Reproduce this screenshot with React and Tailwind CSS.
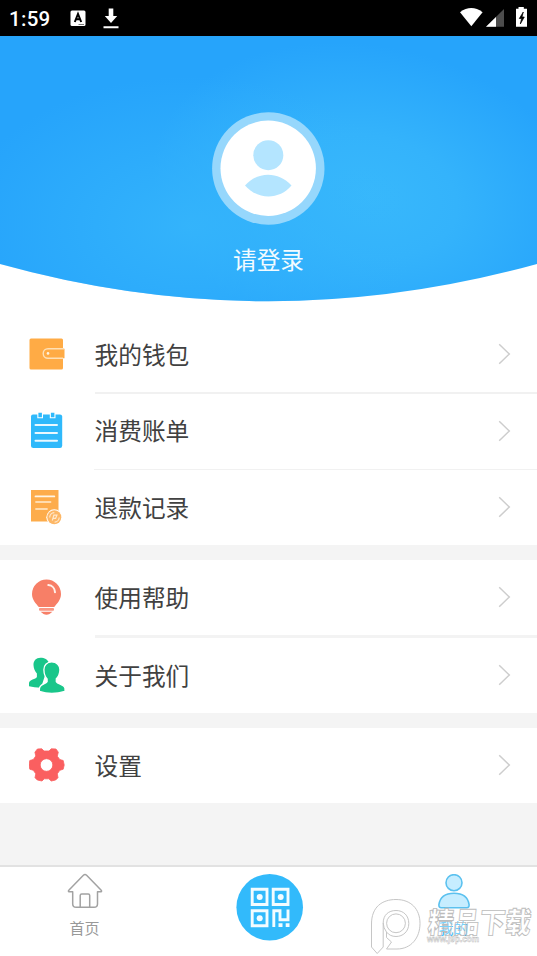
const FONT = "font-['Noto_Sans_CJK_SC',sans-serif]";

function WalletIcon() {
  return (
    <svg width="36" height="36" viewBox="0 0 36 36">
      <rect x="0.5" y="2.5" width="33.5" height="31" rx="1.5" fill="#ffab45" />
      <path d="M35.5 12.7H19a4.8 4.8 0 0 0 0 9.6H35.5z" fill="#ffab45" />
      <path d="M35 12.7H19a4.8 4.8 0 0 0 0 9.6H34" fill="none" stroke="#ffe0b5" strokeWidth="1.4" />
      <circle cx="19" cy="17.4" r="1.3" fill="#fff3e0" />
    </svg>
  );
}

function BillIcon() {
  return (
    <svg width="36" height="36" viewBox="0 0 36 36">
      <path d="M4 2.5H31Q33.2 2.5 33.2 4.5V33.5Q33.2 36 31 36H4.5Q2 36 2 33.5V4.5Q2 2.5 4 2.5Z" fill="#2fb9fb" />
      <path d="M8.3 0V6.3H14V0M20.8 0V6.3H26.5V0" fill="#fff" />
      <path d="M9.4 .8H12.9V5.2H9.4ZM21.9 .8H25.4V5.2H21.9Z" fill="#2fb9fb" />
      <path d="M6.5 13H28M6.5 21H28M6.5 28.7H28" stroke="#e9f8ff" strokeWidth="2" strokeLinecap="round" />
    </svg>
  );
}

function RefundIcon() {
  return (
    <svg width="36" height="36" viewBox="0 0 36 36">
      <path d="M2 1H29.5V32.5H2Z" fill="#fdac4b" />
      <path d="M6.5 7.4H25.3" stroke="#fff5e6" strokeWidth="1.8" strokeLinecap="round" />
      <path d="M7 13H21.5M7 20H18" stroke="#ffdcae" strokeWidth="1.8" strokeLinecap="round" />
      <circle cx="25.3" cy="28.3" r="8" fill="#fff" />
      <circle cx="25.3" cy="28.3" r="7" fill="#fdb766" />
      <path d="M20.7 28.5a4.8 4.8 0 0 1 4.6-4.8M30.2 28.5a4.8 4.8 0 0 1-4.6 4.6M23.3 31.5l1.6-5.3h3l-1.3 3.2h-2.5" fill="none" stroke="#ffe9cd" strokeWidth="1.2" />
    </svg>
  );
}

function BulbIcon() {
  return (
    <svg width="36" height="36" viewBox="0 0 36 36">
      <path d="M17.5.5A14.5 14.5 0 0 0 3 15C3 21 7 24.5 9.8 28H25.2C28 24.5 32 21 32 15A14.5 14.5 0 0 0 17.5.5Z" fill="#f77f67" />
      <path d="M19.3 6C23.3 6.4 25.9 9.5 26 13.3" fill="none" stroke="#fff1eb" strokeWidth="2" strokeLinecap="round" />
      <rect x="10" y="28.9" width="15" height="2.8" rx="1" fill="#f99783" />
      <path d="M11.5 32.7H23.5L20.5 34.9Q17.5 36.5 14.5 34.9Z" fill="#f77f67" />
    </svg>
  );
}

function PeopleIcon() {
  return (
    <svg width="36" height="36" viewBox="0 0 36 36">
      <path d="M11.5.7C7 .7 4.3 3.8 4.5 8.3C4.6 11.5 6 14.5 7.9 16.5V20C7 22.5 0 22.2 0 26.3V29.3Q5 30.7 12 30.7L20 6C18.8 2.5 15.5.7 11.5.7Z" fill="#19c68a" />
      <path d="M22.7 4.9C17.8 4.9 14.7 8.5 14.9 13C15 16.5 16.3 20 18.1 22V24.7C16.5 27.5 10.4 26.7 10.4 32V34.3Q22.5 38.5 36 34.3V31.5C35.5 27.3 28.9 27.5 27.3 24.7V21.8C29.3 19.7 30.8 16.7 30.9 13C31.1 8.5 27.7 4.9 22.7 4.9Z" fill="#19c68a" stroke="#fff" strokeWidth="1.3" />
    </svg>
  );
}

function GearIcon() {
  return (
    <svg width="36" height="36" viewBox="0 0 36 36">
      <path fillRule="evenodd" d="M8.4 2 12.8 1.8 15 4H20L22.2 1.8 27 2 29.3 5.2 28.3 9.2 30.8 12.5 34.2 13.5 35.2 18 34.2 22.2 30.8 23.3 28.3 26.8 29 30.7 26.7 33 22.2 34 19.8 31.8H15.2L13 34 8.3 33 6 30.7 6.8 26.8 4.3 23.3.8 22.2 0 18 .8 13.5 4.3 12.5 6.8 9 5.9 5.2ZM17.5 11.7a6.3 6.3 0 1 0 0 12.6 6.3 6.3 0 0 0 0-12.6Z" fill="#fa5f60" stroke="#fa5f60" strokeWidth=".8" strokeLinejoin="round" />
    </svg>
  );
}

function Row({ icon: Icon, label }) {
  return (
    <div className="flex h-[75px] shrink-0 items-center bg-white pb-0.5 pl-[29px] pr-[26px]">
      <Icon />
      <span className="ml-[29.5px] flex-1 text-[23.7px] leading-[36px] text-[#414141]">{label}</span>
      <svg className="mt-px" width="13" height="22" viewBox="0 0 13 22" fill="none" stroke="#cdcdcd" strokeWidth="1.5">
        <path d="M1.2 1.3 11.3 11 1.2 20.7" />
      </svg>
    </div>
  );
}

function StatusBar() {
  return (
    <div className="flex h-9 shrink-0 items-center bg-black text-white">
      <span className="ml-[9px] w-[61px] pt-0.5 font-[Roboto,sans-serif] text-[20.5px] font-medium leading-9 tracking-[0.3px]">1:59</span>
      <svg width="52" height="36" viewBox="0 0 52 36">
        <rect x=".5" y="10.5" width="15" height="15.5" rx="1.5" fill="#fff" />
        <path d="M4.8 22 8 14 11.2 22M5.7 19.3H10.3" fill="none" stroke="#000" strokeWidth="2" />
        <path d="M8.5 24.5H14" stroke="#555" strokeWidth=".8" />
        <path d="M38.7 8.5H43.3V16H47.2L41 23 34.8 16H38.7ZM33.5 26.3H48.5V28.2H33.5Z" fill="#fff" />
      </svg>
      <svg className="ml-auto" width="77" height="36" viewBox="0 0 77 36">
        <path d="M0 12.2Q11.3 4 22.6 12.2L11.3 26.3Z" fill="#fff" />
        <path d="M44 9V26.7H26Z" fill="#4c4c4c" />
        <path d="M36 16.9V26.7H26Z" fill="#fff" />
        <path d="M58.5 7H63.8V8.8H67V26.7H56V8.8H58.5Z" fill="#fff" />
        <path d="M63.3 12 59.3 18.5H61.6L60.3 24 64.3 17H62Z" fill="#000" stroke="#000" strokeWidth=".7" />
      </svg>
    </div>
  );
}

function Header() {
  return (
    <div className="grid h-[281px] shrink-0 bg-white">
      <svg className="col-start-1 row-start-1" width="537" height="281" viewBox="0 0 537 281">
        <defs>
          <radialGradient id="glow" gradientUnits="userSpaceOnUse" cx="0" cy="0" r="1" gradientTransform="translate(370 160) rotate(12) scale(220 150)">
            <stop offset="0" stopColor="#38b8fb" />
            <stop offset=".4" stopColor="#34b3fb" />
            <stop offset="1" stopColor="#26a4fb" />
          </radialGradient>
          <radialGradient id="glowLeft" gradientUnits="userSpaceOnUse" cx="0" cy="0" r="1" gradientTransform="translate(190 190) scale(230 150)">
            <stop offset="0" stopColor="#35b5fb" stopOpacity=".9" />
            <stop offset="1" stopColor="#35b5fb" stopOpacity="0" />
          </radialGradient>
        </defs>
        <path d="M0 0H537V228Q268.5 302.5 0 228Z" fill="url(#glow)" />
        <path d="M0 0H537V228Q268.5 302.5 0 228Z" fill="url(#glowLeft)" />
      </svg>
      <div className="col-start-1 row-start-1 flex flex-col items-center pt-[76px]">
        <svg className="mr-px" width="113" height="113" viewBox="0 0 113 113">
          <circle cx="56.3" cy="56.5" r="56.2" fill="#96d7fc" />
          <circle cx="56.2" cy="56.3" r="47.7" fill="#fff" />
          <circle cx="56.3" cy="43.2" r="15" fill="#b4e5ff" />
          <path d="M33 73.5C45.5 59 66.5 59 79.5 73.5C67.5 88 45.5 88 33 73.5Z" fill="#b4e5ff" />
        </svg>
        <span className="mt-4 text-[23.7px] leading-[36px] text-[#f2fbff]">请登录</span>
      </div>
    </div>
  );
}

function HomeIcon() {
  return (
    <svg width="36" height="36" viewBox="0 0 36 36" fill="none" stroke="#a2a2a2" strokeWidth="1.5" strokeLinejoin="round">
      <path d="M5.7 18.7H1.8Q1 18 1.8 17.2L16.4 2.2Q18 .8 19.6 2.2L34.2 17.2Q35 18 34.2 18.7H30.5V31Q30.5 34.3 27 34.3H9.2Q5.7 34.3 5.7 31Z" />
      <path d="M13.2 34V22.5Q13.2 21 14.7 21H21.2Q22.7 21 22.7 22.5V34" />
    </svg>
  );
}

function QrButton() {
  return (
    <svg width="68" height="68" viewBox="0 0 68 68">
      <circle cx="33.7" cy="34.2" r="33.3" fill="#32bafb" />
      <g fill="none" stroke="#f3fcff" strokeWidth="2.9">
        <path d="M16.2 16.2H31V31.5H16.2ZM37.2 16.2H52V31.5H37.2ZM16.2 37.7H31V52.7H16.2Z" />
        <path d="M37.8 54V37.7H44V46.7H52V36.5" />
      </g>
      <g fill="#f3fcff">
        <circle cx="23.7" cy="23.9" r="3" />
        <circle cx="44.7" cy="23.9" r="3" />
        <circle cx="23.7" cy="45.2" r="3" />
        <path d="M42.5 50.2H46.5V54H42.5ZM49.7 50.2H53.5V54H49.7Z" />
      </g>
    </svg>
  );
}

function ProfileIcon() {
  return (
    <svg width="36" height="36" viewBox="0 0 36 36" fill="#c6edff" stroke="#5bc1ef" strokeWidth="1.6">
      <circle cx="18" cy="8.7" r="8" />
      <path d="M5.2 33.7Q2.7 33.7 2.9 30.7C4 22.7 9 19.2 18 19.2S32 22.7 33.1 30.7Q33.3 33.7 30.8 33.7Z" />
    </svg>
  );
}

function Watermark() {
  return (
    <div className="pointer-events-none absolute left-[370px] top-[896px] h-[60px] w-[167px]">
      <svg width="167" height="60" viewBox="0 0 167 60">
        <path fillRule="evenodd" d="M1.5 51V28C1.5 11 12 3.5 26 3.5C41 3.5 50 13 50 27.5S41 53 27 53H16.5L21.5 46 16.5 41.5V36A15.5 15.5 0 0 1 13.2 27V51L7.2 57.5Z" fill="#fff" fillOpacity=".6" stroke="#c6c6c6" />
        <path d="M13.2 27C13.2 19 18.5 14.5 26 14.5S38.8 19.5 38.8 27.5 33 40.5 26 40.5Q20 40.5 16.5 36" fill="none" stroke="#c6c6c6" />
        <circle cx="26" cy="27.3" r="9.4" fill="#fff" fillOpacity=".6" stroke="#c6c6c6" />
        <text x="61" y="37" transform="skewX(-6)" fontSize="29" textLength="103" lengthAdjust="spacingAndGlyphs" fontWeight="900" fontFamily="Noto Sans CJK SC, sans-serif" fill="#fff" fillOpacity=".35" stroke="#bcbcbc" strokeWidth=".9">精品下载</text>
        <text x="57" y="46" fontSize="9.5" textLength="52" lengthAdjust="spacingAndGlyphs" fontWeight="700" fontFamily="Liberation Sans, sans-serif" fill="#fff" stroke="#b9b9b9" strokeWidth=".5">www.j9p.com</text>
      </svg>
    </div>
  );
}

export default function App() {
  return (
    <div className={`relative flex h-[956px] w-[537px] flex-col overflow-hidden bg-[#f4f4f4] ${FONT}`}>
      <StatusBar />
      <Header />
      <div className="bg-white">
        <Row icon={WalletIcon} label="我的钱包" />
        <div className="ml-[94.5px] h-[1.5px] bg-[#f1f1f1]" />
        <Row icon={BillIcon} label="消费账单" />
        <div className="ml-[94px] h-[1.5px] bg-[#f1f1f1]" />
        <Row icon={RefundIcon} label="退款记录" />
      </div>
      <div className="mt-[15px] bg-white">
        <Row icon={BulbIcon} label="使用帮助" />
        <div className="ml-[94.5px] h-[3px] bg-[#f3f3f3]" />
        <Row icon={PeopleIcon} label="关于我们" />
      </div>
      <div className="mt-[15px]">
        <Row icon={GearIcon} label="设置" />
      </div>
      <div className="mt-auto grid h-[91px] grid-cols-[169px_201px_167px] border-t-2 border-[#e2e2e2] bg-white">
        <div className="flex flex-col items-center pt-1.5">
          <HomeIcon />
          <span className="mt-[7px] text-[15px] leading-[24px] text-[#999]">首页</span>
        </div>
        <div className="flex justify-center pt-1.5">
          <QrButton />
        </div>
        <div className="flex flex-col items-center pt-[7px]">
          <ProfileIcon />
          <span className="mt-1.5 text-[15px] leading-[24px] text-[#35bbfa]">我的</span>
        </div>
      </div>
      <Watermark />
    </div>
  );
}
